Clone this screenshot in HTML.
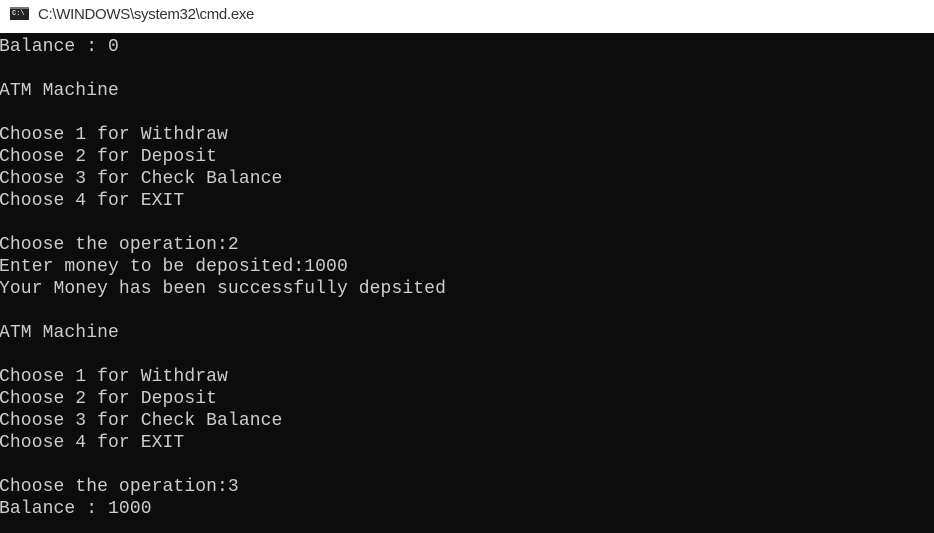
<!DOCTYPE html>
<html><head><style>
html,body{margin:0;padding:0;width:934px;height:533px;overflow:hidden;background:#0c0c0c}
.title{position:absolute;left:0;top:0;width:934px;height:33px;background:#fff;}
.title .t{position:absolute;left:38px;top:6px;font:15px "Liberation Sans",sans-serif;color:#333;letter-spacing:-0.3px}
.icon{position:absolute;left:10px;top:7px;width:19px;height:13px;background:#222;border-top:2px solid #777;box-sizing:border-box}
.icon span{position:absolute;left:2px;top:1px;font:bold 7px "Liberation Mono",monospace;color:#ddd}
pre{position:absolute;left:-1px;top:36px;margin:0;font:18px/22px "Liberation Mono",monospace;color:#cccccc;letter-spacing:0.1px}
</style></head><body>
<div class="title"><div class="icon"><span>C:\</span></div><div class="t">C:\WINDOWS\system32\cmd.exe</div></div>
<pre>Balance : 0

ATM Machine

Choose 1 for Withdraw
Choose 2 for Deposit
Choose 3 for Check Balance
Choose 4 for EXIT

Choose the operation:2
Enter money to be deposited:1000
Your Money has been successfully depsited

ATM Machine

Choose 1 for Withdraw
Choose 2 for Deposit
Choose 3 for Check Balance
Choose 4 for EXIT

Choose the operation:3
Balance : 1000</pre>
</body></html>
